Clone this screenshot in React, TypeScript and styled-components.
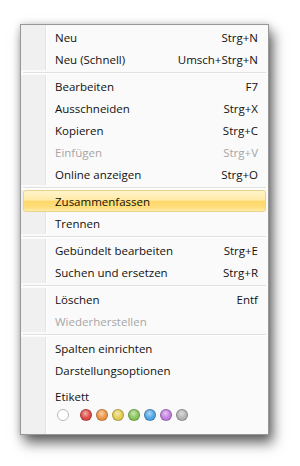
import { createGlobalStyle, styled } from "styled-components";

const GlobalStyle = createGlobalStyle`
	html, body {
		margin: 0;
		padding: 0;
		background: #ffffff;
	}
	body {
		font-family: "Open Sans", "Noto Sans", sans-serif;
	}
`

const Page = styled.div`
	width: 300px;
	height: 466px;
	padding: 24px 0 0 20px;
	box-sizing: border-box;
`

const Menu = styled.div`
	width: 249px;
	box-sizing: border-box;
	border: 1px solid #979797;
	padding-top: 1px;
	background:
		linear-gradient(to right,
			#f0f0f0 0, #f0f0f0 24px,
			#e2e3e3 24px, #e2e3e3 25px,
			#ffffff 25px, #ffffff 26px,
			#fafafa 26px, #fafafa 100%);
	box-shadow: 4px 8px 12px rgba(0, 0, 0, 0.6), 0 0 7px rgba(0, 0, 0, 0.18);
`

const Item = styled.div<{ $active?: boolean; $disabled?: boolean }>`
	display: flex;
	align-items: center;
	justify-content: space-between;
	height: 22px;
	box-sizing: border-box;
	margin: 0 2px;
	padding: 0 7px 0 31px;
	border: 1px solid ${(p) => (p.$active ? "#edd28a" : "transparent")};
	border-radius: 3px;
	font-size: 11.5px;
	color: ${(p) => (p.$disabled ? "#a6a6a6" : "#111111")};
	background: ${(p) =>
		p.$active
			? "linear-gradient(#fff4cc 0%, #ffeaa6 45%, #ffd869 52%, #ffdf80 85%, #ffeeb0 100%)"
			: "transparent"};
	cursor: default;
`

const Shortcut = styled.span`
	white-space: nowrap;
`

const Separator = styled.div`
	height: 5px;
	padding: 2px 2px 0;
	box-sizing: border-box;
	background: #fafafa;

	&::before {
		content: "";
		display: block;
		height: 1px;
		background: #e0e0e0;
		border-bottom: 1px solid #ffffff;
	}
`

const LabelSection = styled.div`
	padding: 8px 0 13px 34px;
`

const LabelTitle = styled.div`
	font-size: 11.5px;
	line-height: 16px;
	color: #111111;
`

const Swatches = styled.div`
	display: flex;
	align-items: center;
	gap: 4px;
	margin-top: 4px;
	padding-left: 2px;
`

const Swatch = styled.span<{ $color: string; $none?: boolean }>`
	width: 12px;
	height: 12px;
	border-radius: 50%;
	box-sizing: border-box;
	margin-right: ${(p) => (p.$none ? "7px" : "0")};
	border: 1px solid ${(p) => (p.$none ? "#b8b8b8" : "rgba(0,0,0,0.25)")};
	background: ${(p) =>
		p.$none
			? "#ffffff"
			: `radial-gradient(circle at 45% 35%, rgba(255,255,255,0.55) 0, rgba(255,255,255,0) 55%), ${p.$color}`};
`

type Entry =
	| { kind: "item"; label: string; shortcut?: string; disabled?: boolean; active?: boolean }
	| { kind: "sep" };

const entries: Entry[] = [
	{ kind: "item", label: "Neu", shortcut: "Strg+N" },
	{ kind: "item", label: "Neu (Schnell)", shortcut: "Umsch+Strg+N" },
	{ kind: "sep" },
	{ kind: "item", label: "Bearbeiten", shortcut: "F7" },
	{ kind: "item", label: "Ausschneiden", shortcut: "Strg+X" },
	{ kind: "item", label: "Kopieren", shortcut: "Strg+C" },
	{ kind: "item", label: "Einfügen", shortcut: "Strg+V", disabled: true },
	{ kind: "item", label: "Online anzeigen", shortcut: "Strg+O" },
	{ kind: "sep" },
	{ kind: "item", label: "Zusammenfassen", active: true },
	{ kind: "item", label: "Trennen" },
	{ kind: "sep" },
	{ kind: "item", label: "Gebündelt bearbeiten", shortcut: "Strg+E" },
	{ kind: "item", label: "Suchen und ersetzen", shortcut: "Strg+R" },
	{ kind: "sep" },
	{ kind: "item", label: "Löschen", shortcut: "Entf" },
	{ kind: "item", label: "Wiederherstellen", disabled: true },
	{ kind: "sep" },
	{ kind: "item", label: "Spalten einrichten" },
	{ kind: "item", label: "Darstellungsoptionen" },
];

const labelColors = ["#de4a44", "#ee9546", "#e3cc50", "#86c558", "#4fa6e6", "#c27ede", "#b3b3b3"];

export default function App() {
	return (
		<Page>
			<GlobalStyle />
			<Menu>
				{entries.map((entry, i) =>
					entry.kind === "sep" ? (
						<Separator key={i} />
					) : (
						<Item key={i} $active={entry.active} $disabled={entry.disabled}>
							<span>{entry.label}</span>
							{entry.shortcut && <Shortcut>{entry.shortcut}</Shortcut>}
						</Item>
					)
				)}
				<LabelSection>
					<LabelTitle>Etikett</LabelTitle>
					<Swatches>
						<Swatch $color="#ffffff" $none />
						{labelColors.map((c) => (
							<Swatch key={c} $color={c} />
						))}
					</Swatches>
				</LabelSection>
			</Menu>
		</Page>
	)
}
